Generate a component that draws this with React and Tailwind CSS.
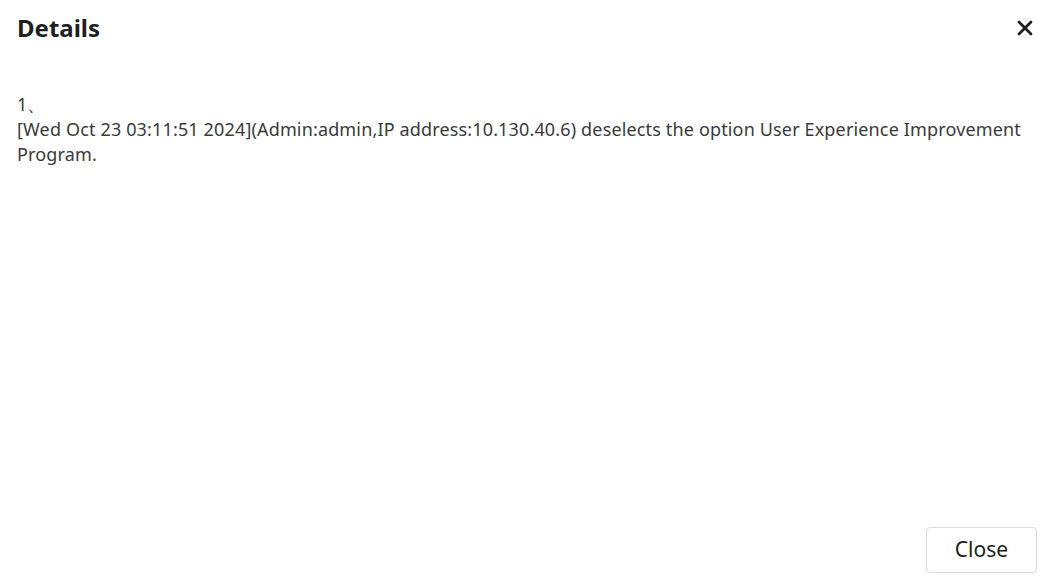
import React from 'react';
import { X } from 'lucide-react';

export default function App() {
  return (
    <div className="h-[582px] w-full bg-white flex flex-col text-[#333] font-['Noto_Sans',sans-serif]">
      {/* Header */}
      <div className="flex items-center justify-between h-[56px] pl-[17px] pr-[20px] shrink-0">
        <h2 className="text-[24px] font-bold text-[#1f1f1f]">Details</h2>
        <button className="text-[#1f1f1f]">
          <X size={24} strokeWidth={2.75} />
        </button>
      </div>

      {/* Body */}
      <div className="flex-1 px-[17px] pt-[36px] text-[18px] leading-[25px] tracking-[0.15px] text-[#3a3a3a]">
        <p>1、</p>
        <p>
          [Wed Oct 23 03:11:51 2024](Admin:admin,IP address:10.130.40.6) deselects the option User Experience Improvement Program.
        </p>
      </div>

      {/* Footer */}
      <div className="flex justify-end pr-[20px] pb-[9px] shrink-0">
        <button className="w-[111px] h-[46px] border border-[#dcdcdc] rounded-[4px] text-[21px] text-[#1f1f1f] bg-white">
          Close
        </button>
      </div>
    </div>
  );
}
